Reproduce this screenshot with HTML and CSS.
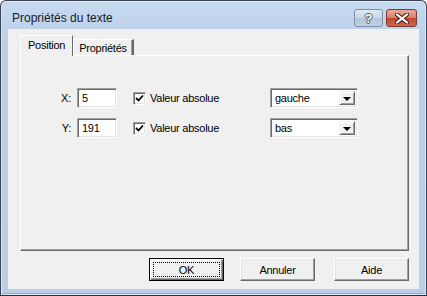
FILE: index.html
```html
<!DOCTYPE html>
<html lang="fr">
<head>
  <meta charset="UTF-8">
  <title>Propriétés du texte</title>
  <link rel="stylesheet" href="styles.css">
</head>
<body>
  <div class="window">
    <div class="titlebar">
      <span class="title">Propriétés du texte</span>
      <div class="caption">
        <div class="cap help">?</div>
        <div class="cap close">
          <svg width="14" height="11" viewBox="0 0 14 11">
            <path d="M2 1.5 L12 9.5 M12 1.5 L2 9.5" stroke="#4a2a26" stroke-width="4.2" stroke-linecap="round"/>
            <path d="M2 1.5 L12 9.5 M12 1.5 L2 9.5" stroke="#fff" stroke-width="2.2" stroke-linecap="round"/>
          </svg>
        </div>
      </div>
    </div>

    <div class="client">
      <div class="tabs">
        <div class="tab active">Position</div>
        <div class="tab">Propriétés</div>
      </div>

      <div class="panel">
        <div class="row">
          <span class="lbl">X:</span>
          <div class="edit">5</div>
          <div class="check"><svg width="9" height="9" viewBox="0 0 9 9"><path d="M1 4 L3.5 6.5 L8 1.5" stroke="#000" stroke-width="1.8" fill="none"/></svg></div>
          <span class="check-text">Valeur absolue</span>
          <div class="combo"><span class="combo-val">gauche</span><span class="drop"></span></div>
        </div>
        <div class="row">
          <span class="lbl">Y:</span>
          <div class="edit">191</div>
          <div class="check"><svg width="9" height="9" viewBox="0 0 9 9"><path d="M1 4 L3.5 6.5 L8 1.5" stroke="#000" stroke-width="1.8" fill="none"/></svg></div>
          <span class="check-text">Valeur absolue</span>
          <div class="combo"><span class="combo-val">bas</span><span class="drop"></span></div>
        </div>
      </div>

      <div class="buttons">
        <div class="btn default"><span class="focus">OK</span></div>
        <div class="btn">Annuler</div>
        <div class="btn help-btn">Aide</div>
      </div>
    </div>
  </div>
</body>
</html>
```

FILE: styles.css
```css
html, body {
  margin: 0;
  padding: 0;
  background: #fff;
}
.window {
  width: 427px;
  height: 296px;
  box-sizing: border-box;
  border: 1px solid #3b4150;
  border-bottom-color: #2a2f38;
  border-radius: 6px 6px 0 0;
  background: linear-gradient(to bottom, #c6daf0 0px, #bbd1ea 40px, #b9cfe8 100%);
  box-shadow: inset 0 0 0 1px #dbe7f5, inset 0 -2px 0 #63c3e6;
  font-family: "Liberation Sans", Arial, sans-serif;
  font-size: 11px;
  letter-spacing: -0.25px;
  color: #000;
}
.titlebar {
  height: 28px;
  display: flex;
  align-items: flex-start;
  justify-content: space-between;
}
.title {
  font-size: 12px;
  letter-spacing: 0;
  color: #1b1b1b;
  padding: 10px 0 0 11px;
}
.caption {
  display: flex;
  gap: 3px;
  padding: 8px 9px 0 0;
}
.cap {
  height: 18px;
  box-sizing: border-box;
  border-radius: 3px;
  display: flex;
  align-items: center;
  justify-content: center;
}
.help {
  width: 29px;
  border: 1px solid #7d8ea5;
  background: linear-gradient(to bottom, #dfe8f3 0%, #c9d7e8 50%, #b2c4da 51%, #c2d2e5 100%);
  color: #fff;
  font-weight: bold;
  font-size: 13px;
  letter-spacing: 0;
  text-shadow: -1px 0 #4d5a6b, 1px 0 #4d5a6b, 0 -1px #4d5a6b, 0 1px #4d5a6b;
}
.close {
  width: 31px;
  border: 1px solid #7b3a30;
  background: linear-gradient(to bottom, #e8a898 0%, #d7806d 50%, #c2452e 51%, #d0654c 100%);
}
.client {
  margin: 0 7px;
  height: 259px;
  background: #f0f0f0;
  border-top: 1px solid #f0f0f0;
}
.tabs {
  display: flex;
  align-items: flex-end;
  height: 20px;
  margin: 5px 0 0 12px;
}
.tab {
  height: 16px;
  box-sizing: border-box;
  padding: 2px 5px 0 5px;
  border-top: 1px solid #fff;
  border-left: 1px solid #fff;
  border-right: 2px solid #696969;
  box-shadow: inset -1px 0 #a0a0a0;
  background: #f0f0f0;
}
.tab.active {
  height: 21px;
  margin-bottom: -1px;
  padding: 3px 7px 0 7px;
  position: relative;
  z-index: 1;
  border-right-width: 1px;
  box-shadow: none;
}
.panel {
  margin: 0 10px 0 12px;
  height: 196px;
  box-sizing: border-box;
  border-top: 1px solid #fff;
  border-left: 1px solid #fff;
  border-right: 1px solid #696969;
  border-bottom: 1px solid #696969;
  box-shadow: inset -1px -1px 0 #a0a0a0;
  padding-top: 32px;
  display: flex;
  flex-direction: column;
  gap: 10px;
}
.row {
  display: flex;
  align-items: center;
  height: 20px;
}
.lbl {
  width: 50px;
  text-align: right;
}
.edit, .combo, .check {
  box-sizing: border-box;
  background: #fff;
  border-top: 1px solid #a0a0a0;
  border-left: 1px solid #a0a0a0;
  border-right: 1px solid #fff;
  border-bottom: 1px solid #fff;
  box-shadow: inset 1px 1px 0 #696969, inset -1px -1px 0 #e3e3e3;
}
.edit {
  margin-left: 6px;
  width: 40px;
  height: 20px;
  padding: 3px 0 0 4px;
}
.check {
  margin-left: 16px;
  width: 13px;
  height: 13px;
  display: flex;
  align-items: center;
  justify-content: center;
}
.check-text {
  margin-left: 4px;
  width: 120px;
}
.combo {
  width: 88px;
  height: 20px;
  display: flex;
  align-items: stretch;
  padding: 2px;
}
.combo-val {
  flex: 1;
  padding: 1px 0 0 2px;
}
.drop {
  width: 16px;
  box-sizing: border-box;
  background: #f0f0f0;
  border-top: 1px solid #f0f0f0;
  border-left: 1px solid #f0f0f0;
  border-right: 1px solid #696969;
  border-bottom: 1px solid #696969;
  box-shadow: inset 1px 1px 0 #fff, inset -1px -1px 0 #a0a0a0;
  display: flex;
  align-items: center;
  justify-content: center;
}
.drop::after {
  content: "";
  border-left: 4px solid transparent;
  border-right: 4px solid transparent;
  border-top: 4px solid #000;
  margin-top: 1px;
}
.buttons {
  display: flex;
  justify-content: flex-end;
  gap: 16px;
  margin: 7px 10px 0 0;
}
.btn {
  width: 75px;
  height: 23px;
  box-sizing: border-box;
  background: #f0f0f0;
  border-top: 1px solid #fff;
  border-left: 1px solid #fff;
  border-right: 1px solid #696969;
  border-bottom: 1px solid #696969;
  box-shadow: inset -1px -1px 0 #a0a0a0, inset 1px 1px 0 #e3e3e3;
  display: flex;
  align-items: center;
  justify-content: center;
}
.help-btn {
  margin-left: 3px;
}
.btn.default {
  border: 1px solid #000;
  box-shadow: inset 1px 1px 0 #fff, inset -1px -1px 0 #696969, inset -2px -2px 0 #a0a0a0;
  padding: 3px;
}
.focus {
  flex: 1;
  align-self: stretch;
  display: flex;
  align-items: center;
  justify-content: center;
  border: 1px dotted #000;
}
```
